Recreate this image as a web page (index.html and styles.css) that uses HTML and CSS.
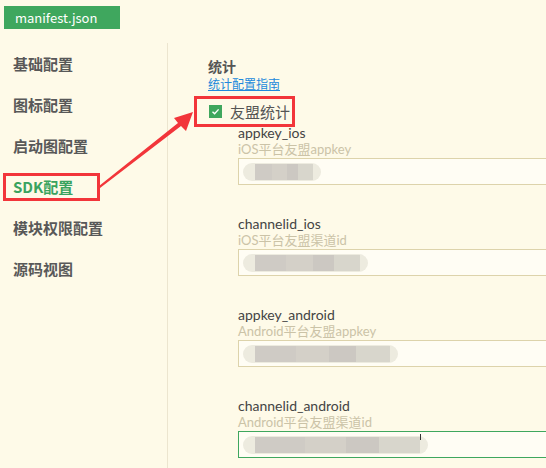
FILE: index.html
```html
<!DOCTYPE html>
<html>
<head>
<meta charset="utf-8">
<link rel="stylesheet" href="styles.css">
</head>
<body>
<div class="page">
  <div class="topbar"><span class="tab">manifest.json</span></div>
  <div class="main">
    <nav class="sidebar">
      <div class="nav-item">基础配置</div>
      <div class="nav-item">图标配置</div>
      <div class="nav-item">启动图配置</div>
      <div class="nav-item active"><span class="mark">SDK配置</span></div>
      <div class="nav-item">模块权限配置</div>
      <div class="nav-item">源码视图</div>
    </nav>
    <section class="content">
      <div class="title">统计</div>
      <a class="link">统计配置指南</a>
      <div class="check-row"><span class="checkbox"><svg viewBox="0 0 13 13" width="13" height="13"><path d="M3.5 6.8 L5.6 8.8 L9.6 4.4" fill="none" stroke="#fff" stroke-width="1.4"/></svg></span><span class="check-label">友盟统计</span></div>
      <div class="fields">
        <div class="field">
          <div class="label">appkey_ios</div>
          <div class="hint">iOS平台友盟appkey</div>
          <div class="input"><span class="blur"><span class="blocks" style="width:58px"></span></span></div>
        </div>
        <div class="field">
          <div class="label">channelid_ios</div>
          <div class="hint">iOS平台友盟渠道id</div>
          <div class="input"><span class="blur"><span class="blocks" style="width:105px"></span></span></div>
        </div>
        <div class="field">
          <div class="label">appkey_android</div>
          <div class="hint">Android平台友盟appkey</div>
          <div class="input"><span class="blur"><span class="blocks" style="width:135px"></span></span></div>
        </div>
        <div class="field">
          <div class="label">channelid_android</div>
          <div class="hint">Android平台友盟渠道id</div>
          <div class="input focus"><span class="blur"><span class="blocks" style="width:165px"></span></span><span class="caret"></span></div>
        </div>
      </div>
    </section>
  </div>
  <svg class="arrow" width="546" height="468" viewBox="0 0 546 468">
    <polygon points="99,186 178,123 174,118 193,112 186,131 181,126 100,188" fill="#f2353a"/>
  </svg>
</div>
</body>
</html>
```
FILE: styles.css
```css
* { box-sizing: border-box; }
html, body { margin: 0; padding: 0; }
body {
  background: #fefae8;
  font-family: "Noto Sans CJK SC", "Noto Sans", sans-serif;
  color: #555;
  width: 546px;
  height: 468px;
  overflow: hidden;
}
.page { position: relative; width: 546px; height: 468px; }
.topbar { height: 43px; padding: 4px 0 0 4px; }
.tab {
  display: inline-flex;
  align-items: center;
  width: 116px;
  height: 23px;
  padding-left: 11px;
  background: #3fa75e;
  color: #fff;
  font-size: 13px;
  line-height: 1;
}
.main { display: flex; height: 425px; }
.sidebar {
  width: 168px;
  flex: none;
  border-right: 1px solid #ece5cf;
}
.nav-item {
  height: 41px;
  display: flex;
  align-items: center;
  padding-left: 13px;
  font-size: 15px;
  font-weight: bold;
  color: #585858;
}
.nav-item.active { color: #3aa35f; padding-left: 3px; }
.nav-item .mark {
  display: flex;
  align-items: center;
  width: 97px;
  height: 28px;
  padding-left: 7px;
  border: 3px solid #f2353a;
}
.content { flex: 1; padding: 13px 0 0 40px; min-width: 0; }
.title { font-size: 14px; font-weight: bold; line-height: 20px; color: #555; }
.link {
  display: block;
  font-size: 12px;
  line-height: 16px;
  color: #2189dc;
  text-decoration: underline;
}
.check-row {
  display: flex;
  align-items: center;
  width: 101px;
  height: 31px;
  margin: 4px 0 0 -14px;
  padding-left: 12px;
  border: 3px solid #f2353a;
}
.checkbox {
  width: 13px; height: 13px;
  background: #3fa75e;
  display: inline-flex;
}
.check-label { margin-left: 8px; font-size: 15px; color: #555; }
.fields { padding-left: 30px; margin-top: -3px; }
.field { margin-bottom: 30px; }
.label {
  font-family: "Lato", "Noto Sans CJK SC", sans-serif;
  font-size: 14px;
  line-height: 17px;
  color: #444;
}
.hint {
  font-family: "Lato", "Noto Sans CJK SC", sans-serif;
  font-size: 13px;
  line-height: 16px;
  color: #cbc3a7;
}
.input {
  position: relative;
  height: 27px;
  margin-top: 1px;
  background: #fffdf4;
  border: 1px solid #ddd3ab;
  border-right: none;
  display: flex;
  align-items: center;
  padding-left: 4px;
}
.input.focus { border-color: #3fa75e; }
.blur {
  display: inline-flex;
  align-items: center;
  height: 18px;
  padding: 0 8px 0 12px;
  border-radius: 9px;
  background: #edebdf;
}
.blocks {
  display: block;
  height: 16px;
  background: linear-gradient(90deg, #cfcbc5 0 30%, #d4d0c8 30% 55%, #ccc8c2 55% 75%, #d8d6cc 75% 100%);
}
.caret {
  width: 1px; height: 6px; background: #333;
  position: absolute; left: 181px; top: 2px;
}
.arrow { position: absolute; left: 0; top: 0; pointer-events: none; }
```
